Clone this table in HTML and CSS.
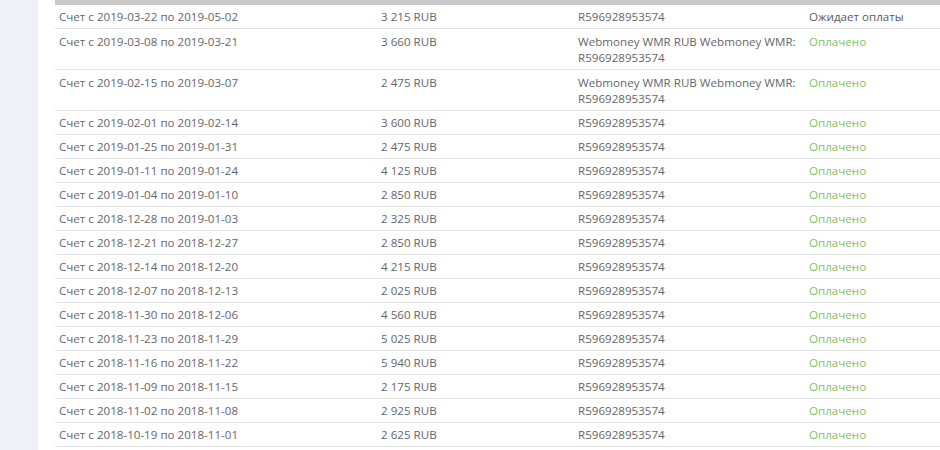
FILE: index.html
```html
<!DOCTYPE html>
<html>
<head>
<meta charset="utf-8">
<link rel="stylesheet" href="styles.css">
</head>
<body>
<div class="page">
  <div class="side"></div>
  <div class="panel">
    <table class="bills">
      <colgroup>
        <col class="c1"><col class="c2"><col class="c3"><col class="c4">
      </colgroup>
      <thead><tr><th></th><th></th><th></th><th></th></tr></thead>
      <tbody>
        <tr><td>Счет с 2019-03-22 по 2019-05-02</td><td>3 215 RUB</td><td>R596928953574</td><td class="wait">Ожидает оплаты</td></tr>
        <tr class="tall"><td>Счет с 2019-03-08 по 2019-03-21</td><td>3 660 RUB</td><td>Webmoney WMR RUB Webmoney WMR: R596928953574</td><td class="paid">Оплачено</td></tr>
        <tr class="tall"><td>Счет с 2019-02-15 по 2019-03-07</td><td>2 475 RUB</td><td>Webmoney WMR RUB Webmoney WMR: R596928953574</td><td class="paid">Оплачено</td></tr>
        <tr><td>Счет с 2019-02-01 по 2019-02-14</td><td>3 600 RUB</td><td>R596928953574</td><td class="paid">Оплачено</td></tr>
        <tr><td>Счет с 2019-01-25 по 2019-01-31</td><td>2 475 RUB</td><td>R596928953574</td><td class="paid">Оплачено</td></tr>
        <tr><td>Счет с 2019-01-11 по 2019-01-24</td><td>4 125 RUB</td><td>R596928953574</td><td class="paid">Оплачено</td></tr>
        <tr><td>Счет с 2019-01-04 по 2019-01-10</td><td>2 850 RUB</td><td>R596928953574</td><td class="paid">Оплачено</td></tr>
        <tr><td>Счет с 2018-12-28 по 2019-01-03</td><td>2 325 RUB</td><td>R596928953574</td><td class="paid">Оплачено</td></tr>
        <tr><td>Счет с 2018-12-21 по 2018-12-27</td><td>2 850 RUB</td><td>R596928953574</td><td class="paid">Оплачено</td></tr>
        <tr><td>Счет с 2018-12-14 по 2018-12-20</td><td>4 215 RUB</td><td>R596928953574</td><td class="paid">Оплачено</td></tr>
        <tr><td>Счет с 2018-12-07 по 2018-12-13</td><td>2 025 RUB</td><td>R596928953574</td><td class="paid">Оплачено</td></tr>
        <tr><td>Счет с 2018-11-30 по 2018-12-06</td><td>4 560 RUB</td><td>R596928953574</td><td class="paid">Оплачено</td></tr>
        <tr><td>Счет с 2018-11-23 по 2018-11-29</td><td>5 025 RUB</td><td>R596928953574</td><td class="paid">Оплачено</td></tr>
        <tr><td>Счет с 2018-11-16 по 2018-11-22</td><td>5 940 RUB</td><td>R596928953574</td><td class="paid">Оплачено</td></tr>
        <tr><td>Счет с 2018-11-09 по 2018-11-15</td><td>2 175 RUB</td><td>R596928953574</td><td class="paid">Оплачено</td></tr>
        <tr><td>Счет с 2018-11-02 по 2018-11-08</td><td>2 925 RUB</td><td>R596928953574</td><td class="paid">Оплачено</td></tr>
        <tr><td>Счет с 2018-10-19 по 2018-11-01</td><td>2 625 RUB</td><td>R596928953574</td><td class="paid">Оплачено</td></tr>
      </tbody>
    </table>
  </div>
</div>
</body>
</html>
```
FILE: styles.css
```css
html, body {
  margin: 0;
  padding: 0;
  height: 100%;
  overflow: hidden;
}
body {
  font-family: "Open Sans", "Liberation Sans", sans-serif;
  font-size: 11.6px;
  color: #666;
  background: #eef1f5;
}
.page {
  display: flex;
  min-height: 450px;
}
.side {
  width: 38px;
  flex: none;
}
.panel {
  flex: 1;
  background: #fff;
  padding-left: 17px;
  overflow: hidden;
}
.bills {
  border-collapse: collapse;
  width: 960px;
  table-layout: fixed;
}
.c1 { width: 322px; }
.c2 { width: 197px; }
.c3 { width: 231px; }
.c4 { width: 210px; }
.bills th {
  background: #c9c9c9;
  height: 5px;
  padding: 0;
}
.bills td {
  padding: 4px 4px 3px;
  line-height: 16px;
  border-bottom: 1px solid #e4e4e4;
  vertical-align: top;
}
.bills .tall td {
  padding-top: 4.5px;
  padding-bottom: 3.5px;
}
.wait { color: #5a5a5a; }
.paid { color: #7bc55e; }
```
